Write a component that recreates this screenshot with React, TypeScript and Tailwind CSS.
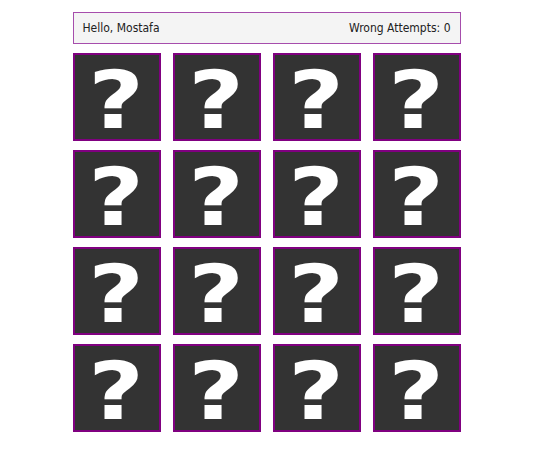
const cards = Array.from({ length: 16 }, (_, i) => i);

const Card = () => (
	<div className="flex items-center justify-center h-[88px] bg-[#333333] border-2 border-[#800080]">
		<span
			className="block text-[80px] font-bold leading-[88px] text-white translate-y-[4px] scale-x-[1.2]"
			style={{ fontFamily: '"DejaVu Sans", Verdana, sans-serif' }}
		>
			?
		</span>
	</div>
);

const App = () => (
	<div className="min-h-[461px] bg-white" style={{ fontFamily: '"DejaVu Sans Condensed", "DejaVu Sans", sans-serif' }}>
		<div className="w-[388px] mx-auto pt-3">
			<div className="flex items-center justify-between h-8 px-[9px] bg-[#f4f4f4] border border-[#a64dac] text-[12px] text-[#222222]">
				<span>Hello, Mostafa</span>
				<span>Wrong Attempts: 0</span>
			</div>

			<div className="grid grid-cols-4 gap-x-3 gap-y-[9px] mt-[9px]">
				{cards.map((i) => (
					<Card key={i} />
				))}
			</div>
		</div>
	</div>
);

export default App;
